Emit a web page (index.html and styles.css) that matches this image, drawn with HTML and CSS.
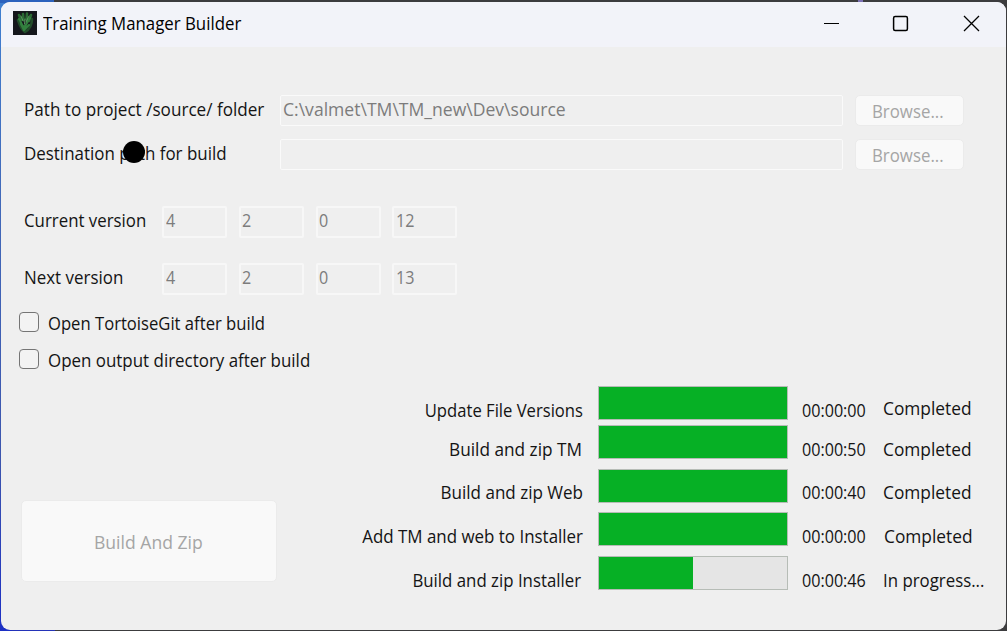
FILE: index.html
```
<!DOCTYPE html>
<html lang="en">
<head>
<meta charset="utf-8">
<title>Training Manager Builder</title>
<link rel="stylesheet" href="styles.css">
</head>
<body>
<div class="window">
  <header class="titlebar">
    <svg class="app-icon" viewBox="0 0 24 24">
      <rect width="24" height="24" fill="#15171c"/>
      <g fill="none" stroke-linecap="round" stroke-linejoin="round">
        <path d="M6 4l2 5M10 3l.5 6M14 2.500l-.5 6M18 4l-2 6" stroke="#2b6a34" stroke-width="2.600"/>
        <path d="M5 9c1 3 2 8 7 12 5-3 7-7 7-13" stroke="#224c2a" stroke-width="2.600"/>
        <path d="M6 8c2 2 2 6 5 8 3-2 3-6 6-9M8 13l3 6 5-5" stroke="#32803e" stroke-width="2.200"/>
        <path d="M8 5l2 5M16 5l-3 6M12 8l-.5 5" stroke="#6cad70" stroke-width="1" opacity=".8"/>
      </g>
    </svg>
    <h1 class="title t93">Training Manager Builder</h1>
    <svg class="controls" viewBox="0 0 160 20" fill="none" stroke="#000" stroke-width="1.300">
      <path d="M2 9.500h15" stroke-width="1"/>
      <rect x="71.600" y="2.600" width="13.800" height="13.800" rx="1.500" stroke-width="1.500"/>
      <path d="M142 2l15 15M157 2l-15 15"/>
    </svg>
  </header>
  <main class="content">
    <section class="paths">
      <div class="path-row">
        <label class="label t951">Path to project /source/ folder</label>
        <div class="field wide"><span class="t977">C:\valmet\TM\TM_new\Dev\source</span></div>
        <button class="browse" disabled><span class="t935">Browse...</span></button>
      </div>
      <div class="path-row">
        <label class="label t94">Destination path for build</label>
        <div class="field wide"></div>
        <button class="browse" disabled><span class="t935">Browse...</span></button>
        <i class="dot"></i>
      </div>
    </section>
    <section class="versions">
      <div class="version-row">
        <label class="label t935">Current version</label>
        <div class="field"><span class="t90">4</span></div>
        <div class="field"><span class="t90">2</span></div>
        <div class="field"><span class="t90">0</span></div>
        <div class="field"><span class="t90">12</span></div>
      </div>
      <div class="version-row">
        <label class="label t94">Next version</label>
        <div class="field"><span class="t90">4</span></div>
        <div class="field"><span class="t90">2</span></div>
        <div class="field"><span class="t90">0</span></div>
        <div class="field"><span class="t90">13</span></div>
      </div>
    </section>
    <section class="options">
      <label class="option"><i class="box"></i><span class="t925">Open TortoiseGit after build</span></label>
      <label class="option"><i class="box"></i><span class="t94">Open output directory after build</span></label>
    </section>
    <section class="bottom">
      <button class="build" disabled><span class="t977">Build And Zip</span></button>
      <div class="tasks">
        <div class="task first">
          <span class="name t925">Update File Versions</span>
          <div class="bar"><div class="fill"></div></div>
          <span class="time t90">00:00:00</span><span class="status t96">Completed</span>
        </div>
        <div class="task second">
          <span class="name t957">Build and zip TM</span>
          <div class="bar"><div class="fill"></div></div>
          <span class="time t90">00:00:50</span><span class="status t96">Completed</span>
        </div>
        <div class="task">
          <span class="name t946">Build and zip Web</span>
          <div class="bar"><div class="fill"></div></div>
          <span class="time t90">00:00:40</span><span class="status t96">Completed</span>
        </div>
        <div class="task fourth">
          <span class="name t94">Add TM and web to Installer</span>
          <div class="bar"><div class="fill"></div></div>
          <span class="time t90">00:00:00</span><span class="status t96">Completed</span>
        </div>
        <div class="task last">
          <span class="name t935">Build and zip Installer</span>
          <div class="bar"><div class="fill partial" style="width:50%"></div></div>
          <span class="time t90">00:00:46</span><span class="status t935">In progress...</span>
        </div>
      </div>
    </section>
  </main>
</div>
</body>
</html>
```
FILE: styles.css
```
* { box-sizing: border-box; }
body {
  margin: 0;
  width: 1007px;
  height: 631px;
  padding: 2px 1px 1px;
  overflow: hidden;
  background:
    linear-gradient(90deg, #2c62bd 54px, transparent 54px) 0 0 / 100% 3px no-repeat,
    linear-gradient(90deg, transparent 858px, #7b70b4 858px, #7b70b4 863px, transparent 863px) 0 0 / 100% 2px no-repeat,
    linear-gradient(180deg, #3f7fd0, #4169b9 200px, #3c55ae 460px, #1c2fc4) 0 0 / 12px 100% no-repeat,
    linear-gradient(90deg, #2433b8 55px, transparent 55px) 0 100% / 100% 3px no-repeat,
    #3c3c3e;
  font: 18px/24px "Open Sans", "Noto Sans", sans-serif;
  color: #141414;
}

.window {
  width: 1005px;
  height: 628px;
  border-radius: 9px;
  overflow: hidden;
  background: #efefef;
}

/* Narrowed label widths */
.t90, .t925, .t93, .t935, .t94, .t946, .t951, .t957, .t96, .t977 {
  display: inline-block;
  white-space: nowrap;
  transform-origin: left;
}
.t90 { transform: scaleX(.896); }
.t925 { transform: scaleX(.924); }
.t93 { transform: scaleX(.934); }
.t935 { transform: scaleX(.935); }
.t94 { transform: scaleX(.94); }
.t946 { transform: scaleX(.946); }
.t951 { transform: scaleX(.951); }
.t957 { transform: scaleX(.957); }
.t96 { transform: scaleX(.962); }
.t977 { transform: scaleX(.976); }

.titlebar {
  display: flex;
  height: 45px;
  padding: 9px 0 0 12px;
  background: #f2f3f9;
}
.app-icon { width: 24px; height: 24px; flex: none; }
.title {
  margin: 0 0 0 6px;
  width: 240px;
  font-size: 18px;
  font-weight: 400;
  color: #000;
}
.controls { width: 160px; height: 20px; margin: 3px 0 0 539px; flex: none; }

.content { padding: 48px 0 0 18px; }

.paths { display: flex; flex-direction: column; gap: 13px; }
.path-row { position: relative; display: flex; height: 31px; }
.label { flex: none; margin: 2px 0 0 4.500px; }
.path-row .label { width: 256.500px; }
.dot {
  position: absolute;
  left: 104px;
  top: 2px;
  width: 22px;
  height: 22px;
  border-radius: 50%;
  background: #000;
}

.field {
  flex: none;
  width: 65px;
  height: 32px;
  padding: 0 1.500px;
  border: 2px solid #f7f7f7;
  border-radius: 2px;
  background: #efefef;
  color: #7c7c7c;
}
.wide { width: 563px; height: 31px; border-width: 1px; border-color: #fafafa; padding: 1px 2px; }

button {
  display: flex;
  align-items: center;
  justify-content: center;
  padding: 0;
  border: 1px solid #ebebeb;
  border-radius: 5px;
  background: #f9f9f9;
  color: #a5a5a5;
  font: inherit;
}
button span { transform-origin: center; }
.browse { width: 109px; height: 31px; margin-left: 12px; padding: 0 0 0 2px; }

.versions { display: flex; flex-direction: column; gap: 25px; margin-top: 36px; }
.version-row { display: flex; height: 32px; gap: 11.700px; }
.version-row .label { width: 127px; }

.options { display: flex; flex-direction: column; gap: 13px; margin-top: 16px; }
.option { display: flex; height: 24px; }
.box {
  flex: none;
  width: 20px;
  height: 20px;
  margin: 1px 9px 0 0;
  border: 1.500px solid #757575;
  border-radius: 4px;
  background: #f3f3f3;
}

.bottom { display: flex; margin-top: 14px; }
.build { width: 256px; height: 82px; margin: 114px 0 0 2px; padding: 2px 0 0 1px; flex: none; }

.tasks { width: 710px; }
.task { display: flex; height: 35px; margin-bottom: 8.700px; }
.task.first { margin-bottom: 4px; }
.name {
  width: 306px;
  flex: none;
  margin-top: 11.500px;
  text-align: right;
  transform-origin: right;
}
.second .name { padding-right: 1px; }
.last .name { padding-right: 2px; }
.bar {
  width: 190px;
  height: 34px;
  flex: none;
  margin: 0 1px 0 15px;
  border: 1px solid #b6bcb6;
  background: #e5e5e5;
}
.fill { height: 100%; background: #06b025; }
.time { width: 81px; flex: none; margin: 11.500px 0 0 13px; }
.status { margin-top: 11.500px; }
.first .status { margin-top: 10px; }
.fourth .status { margin-left: 1px; }
```
